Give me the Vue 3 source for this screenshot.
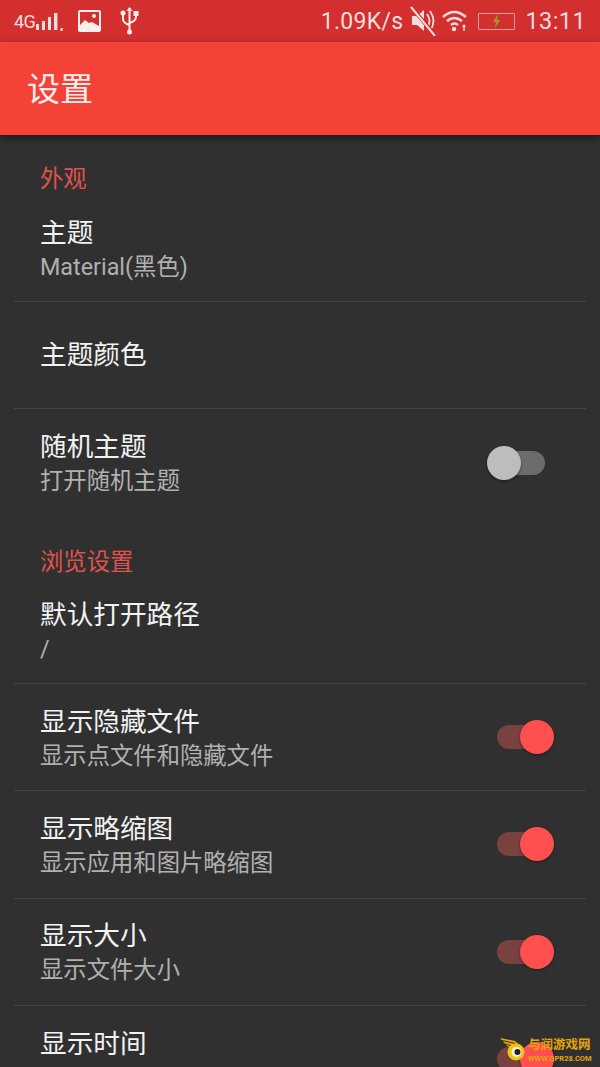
<script setup>
const sections = [
  { title: '外观', rows: [
    { t: '主题', s: 'Material(黑色)', d: true },
    { t: '主题颜色', d: true },
    { t: '随机主题', s: '打开随机主题', sw: 'off' },
  ]},
  { title: '浏览设置', rows: [
    { t: '默认打开路径', s: '/', d: true },
    { t: '显示隐藏文件', s: '显示点文件和隐藏文件', sw: 'on', d: true },
    { t: '显示略缩图', s: '显示应用和图片略缩图', sw: 'on', d: true },
    { t: '显示大小', s: '显示文件大小', sw: 'on', d: true },
    { t: '显示时间', s: '', sw: 'on' },
  ]},
]
</script>

<template>
  <div class="page">
    <div class="status">
      <div class="st-left">
        <span class="net">4G</span>
        <svg class="bars" width="30" height="20" viewBox="0 0 30 20"><path d="M1 13h3v6H1zM7 10h3v9H7zM13 6h3v13h-3zM19 2h3.400v17H19z" fill="#f6dede"/><path d="M25.500 17h2.500l-.8 4h-1.700z" fill="#f6dede"/></svg>
        <svg class="pic" width="23" height="22" viewBox="0 0 23 22"><rect width="23" height="22" rx="2" fill="#fbeeee"/><rect x="2" y="2" width="19" height="14" fill="#d32f2f"/><circle cx="16" cy="6" r="2" fill="#fbeeee"/><path d="M2 15l5-5 4 3 3-1 7 4v4H2z" fill="#fbeeee"/></svg>
        <svg class="usb" width="21" height="28" viewBox="0 0 21 28"><path d="M10.500 1v24M4 7v5q0 4 6.500 6M17 7v3q0 4-6.500 6" fill="none" stroke="#fbeeee" stroke-width="2"/><path d="M10.500 0l3 4h-6z" fill="#fbeeee"/><circle cx="4" cy="6" r="2.500" fill="#fbeeee"/><rect x="14.500" y="4" width="5" height="5" fill="#fbeeee"/><circle cx="10.500" cy="25" r="2.500" fill="#fbeeee"/></svg>
      </div>
      <div class="st-right">
        <span class="speed">1.09K/s</span>
        <svg class="mute" width="26" height="30" viewBox="0 0 26 30"><path d="M2 10h5l7-6v21l-7-6H2z" fill="#f6dede"/><path d="M17 8q5 7 0 14M20 5q7 10 0 20" fill="none" stroke="#f6dede" stroke-width="1.800"/><path d="M2 2l22 26" stroke="#d32f2f" stroke-width="4"/><path d="M1 1l24 29" stroke="#f6dede" stroke-width="2"/></svg>
        <svg class="wifi" width="26" height="22" viewBox="0 0 26 22"><path d="M1 7q11-10 23 0M5 11q7-6 15 0M9 15q3.500-3 7 0" fill="none" stroke="#f6dede" stroke-width="2.400"/><circle cx="12" cy="19" r="2.200" fill="#f6dede"/><path d="M22 14l2 3h-4zM21.300 17h1.400v4h-1.400z" fill="#f6dede"/></svg>
        <span class="battery"><svg width="9" height="14" viewBox="0 0 9 14"><path d="M6 0L1 8h3l-1 6 5-8H5z" fill="#8fa32a"/></svg></span>
        <span class="time">13:11</span>
      </div>
    </div>
    <header class="bar">设置</header>
    <main class="list">
      <section v-for="sec in sections" :key="sec.title">
        <h2 class="head">{{ sec.title }}</h2>
        <div v-for="r in sec.rows" :key="r.t" class="row" :class="{ div: r.d }">
          <div class="txt">
            <div class="title">{{ r.t }}</div>
            <div v-if="r.s !== undefined" class="sub">{{ r.s }}</div>
          </div>
          <span v-if="r.sw" class="sw" :class="r.sw"><i class="track"></i><i class="knob"></i></span>
        </div>
      </section>
    </main>
    <div class="wm">
      <svg width="28" height="26" viewBox="0 0 28 26">
        <path d="M1 1l15 3 9 8-3 4L8 9z" fill="#e8a50c"/>
        <path d="M3 3.500l13 3M6 7l11 3" stroke="#3a2d1a" stroke-width="1"/>
        <circle cx="17" cy="15" r="8.500" fill="#f1c40f"/>
        <circle cx="17.500" cy="15" r="5" fill="#f4f1e4"/>
        <circle cx="18.500" cy="15" r="3" fill="#222"/>
      </svg>
      <div class="wm-t"><b>与润游戏网</b><small>WWW.QPR28.COM</small></div>
    </div>
  </div>
</template>

<style>
html, body { margin: 0; padding: 0; background: #303030; }
</style>

<style scoped>
.page { position: relative; width: 600px; height: 1067px; overflow: hidden; background: #303030; font-family: Roboto, "Noto Sans CJK SC", sans-serif; }
.status { height: 42px; background: #d32f2f; display: flex; align-items: center; justify-content: space-between; padding: 0 14px 0 14px; color: #f6dede; box-sizing: border-box; }
.st-left, .st-right { display: flex; align-items: center; }
.net { font-size: 18px; width: 21px; letter-spacing: -0.500px; }
.pic { margin-left: 13px; }
.usb { margin-left: 18px; }
.speed { font-size: 23px; letter-spacing: 0.300px; }
.mute { margin-left: 7px; }
.wifi { margin-left: 6px; }
.battery { margin-left: 10px; width: 35px; height: 15px; border: 1px solid #e79a9a; border-radius: 1px; display: flex; align-items: center; justify-content: center; }
.time { font-size: 23.500px; margin-left: 10px; letter-spacing: 0.400px; }
.bar { height: 93px; background: #f44336; color: #fbeeee; font-size: 33px; line-height: 96px; padding-left: 27px; box-shadow: 0 3px 8px rgba(0,0,0,.45); position: relative; }
.list { padding: 0 14px; }
.head { margin: 0; font-weight: 400; font-size: 23.330px; color: #e0524d; padding-left: 26px; height: 60px; line-height: 89px; }
section:nth-child(2) .head { height: 60.400px; line-height: 90px; }
.row { height: 107.200px; display: flex; align-items: center; justify-content: space-between; padding: 0 41px 0 26px; box-sizing: border-box; }
.row.div { border-bottom: 1px solid #444; }
.title { font-size: 26.670px; color: #f2f2f2; line-height: 38px; }
.sub { font-size: 23.330px; color: #b0b0b0; line-height: 31px; min-height: 31px; }
.sw { position: relative; width: 48px; height: 24px; display: block; flex: none; }
.track { position: absolute; left: 0; top: 0; width: 48px; height: 24px; border-radius: 12px; }
.knob { position: absolute; top: -5px; width: 34px; height: 34px; border-radius: 50%; box-shadow: 0 1px 3px rgba(0,0,0,.4); }
.off .track { background: #6c6c6c; }
.off .knob { left: -10px; background: #bdbdbd; }
.on .track { background: #7a4141; }
.on .knob { left: 23px; background: #ff4f4f; }
.wm { position: absolute; left: 499px; top: 1037px; display: flex; align-items: flex-start; }
.wm-t { display: flex; flex-direction: column; margin: 2px 0 0 1px; color: #e8a50c; line-height: 1; }
.wm-t b { font-size: 12.500px; white-space: nowrap; }
.wm-t small { font-size: 7.500px; font-weight: 700; margin-top: 3px; white-space: nowrap; }
</style>
